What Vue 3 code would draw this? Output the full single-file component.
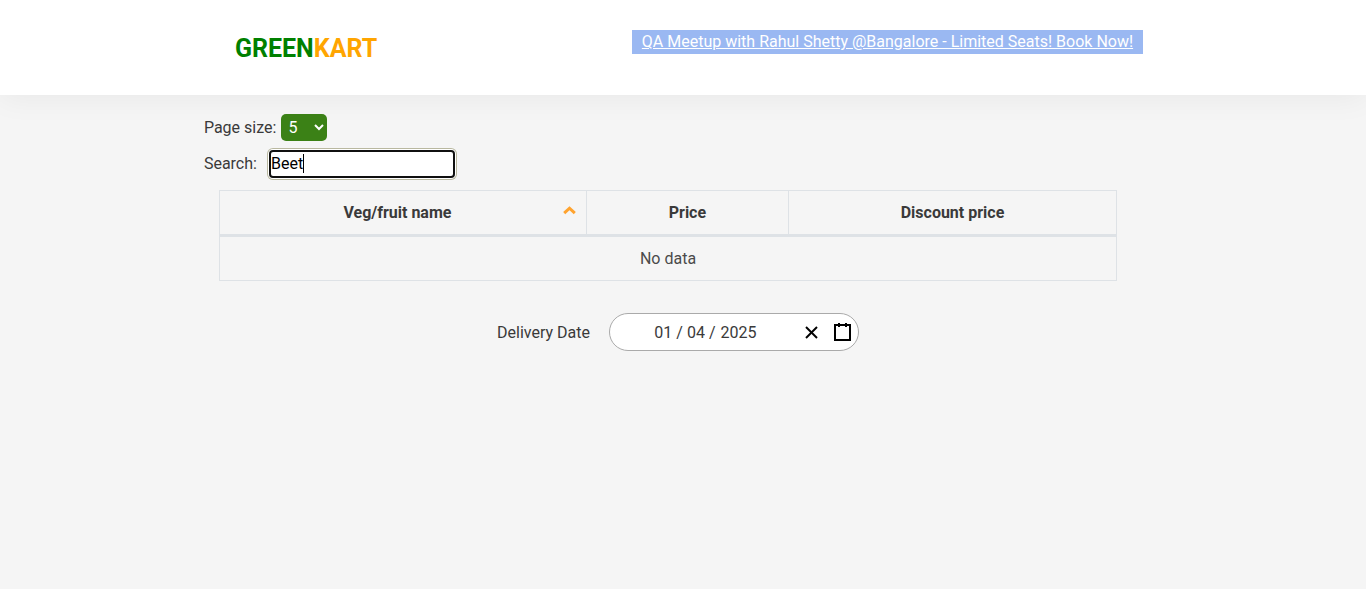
<script setup>
import { ref } from 'vue'

const pageSize = ref('5')
const search = ref('Beet')
const day = ref('01')
const month = ref('04')
const year = ref('2025')

function clearDate() {
  day.value = ''
  month.value = ''
  year.value = ''
}
</script>

<template>
  <div class="page">
    <header class="header">
      <div class="header-inner">
        <div class="brand">GREEN<span class="brand-accent">KART</span></div>
        <a class="promo" href="#">QA Meetup with Rahul Shetty @Bangalore - Limited Seats! Book Now!</a>
      </div>
    </header>

    <main class="content">
      <div class="field size-field">
        <label for="page-size">Page size:</label>
        <select id="page-size" v-model="pageSize" class="size-select">
          <option>5</option>
          <option>10</option>
          <option>20</option>
        </select>
      </div>
      <div class="field search-field">
        <label for="search">Search:</label>
        <div class="search-wrap">
          <input id="search" v-model="search" class="search-input" type="text" />
          <span class="caret"></span>
        </div>
      </div>

      <table class="offers">
        <colgroup>
          <col class="col-name" />
          <col class="col-price" />
          <col />
        </colgroup>
        <thead>
          <tr>
            <th scope="col">
              <div class="sortable">
                <span class="sort-label">Veg/fruit name</span>
                <svg class="sort-icon" width="13" height="9" viewBox="0 0 13 9">
                  <path d="M1.2 7.2 L6.5 2.2 L11.8 7.2" fill="none" stroke="#ffa32e" stroke-width="3" />
                </svg>
              </div>
            </th>
            <th scope="col">Price</th>
            <th scope="col">Discount price</th>
          </tr>
        </thead>
        <tbody>
          <tr>
            <td colspan="3">No data</td>
          </tr>
        </tbody>
      </table>

      <div class="delivery">
        <label for="day">Delivery Date</label>
        <div class="date-picker">
          <div class="date-parts">
            <input id="day" v-model="day" class="part" type="text" aria-label="Delivery Date, day" />
            <span>/</span>
            <input v-model="month" class="part" type="text" aria-label="Month" />
            <span>/</span>
            <input v-model="year" class="part part-year" type="text" aria-label="Year" />
          </div>
          <button class="icon-button" type="button" aria-label="Clear date" @click="clearDate">
            <svg width="19" height="19" viewBox="0 0 19 19" stroke="#000" stroke-width="2">
              <line x1="4" y1="4" x2="15" y2="15" />
              <line x1="15" y1="4" x2="4" y2="15" />
            </svg>
          </button>
          <button class="icon-button" type="button" aria-label="Open calendar">
            <svg width="19" height="19" viewBox="0 0 19 19" fill="none" stroke="#000" stroke-width="2">
              <rect x="2" y="2" width="15" height="15" />
              <line x1="6" y1="0" x2="6" y2="4" />
              <line x1="13" y1="0" x2="13" y2="4" />
            </svg>
          </button>
        </div>
      </div>
    </main>
  </div>
</template>

<style>
body {
  margin: 0;
  background: #f5f5f5;
}
</style>

<style scoped>
.page {
  font-family: Roboto, sans-serif;
  font-size: 16px;
  line-height: 24px;
  color: #3a3a3a;
}

.page *,
.page *::before {
  box-sizing: border-box;
}

.header {
  background: #fff;
  box-shadow: 0 2px 30px rgba(0, 0, 0, 0.06);
}

.header-inner {
  display: flex;
  justify-content: space-between;
  align-items: flex-start;
  width: 70%;
  margin: 0 auto;
  padding: 30px 18px 28px 30px;
}

.brand {
  font-size: 25px;
  font-weight: 700;
  line-height: 37px;
  color: #008000;
}

.brand-accent {
  color: #ffa500;
}

.promo {
  padding: 0 10px;
  background: #9ab8f2;
  color: #fff;
}

.content {
  width: calc(70% + 2px);
  margin: 0 auto;
  padding: 18px 30px 0 0;
}

.field {
  display: flex;
  align-items: center;
}

.size-field {
  gap: 5px;
  height: 29px;
}

.search-field {
  gap: 12px;
  margin-top: 8px;
}

.size-select {
  width: 46px;
  height: 27px;
  padding: 0 0 0 3px;
  border: 0;
  border-radius: 5px;
  background: #3b8116;
  color: #fff;
  font: inherit;
}

.search-wrap {
  position: relative;
}

.search-input {
  display: block;
  width: 186px;
  height: 28px;
  padding: 0 0 1px;
  border: 2px solid #101010;
  border-radius: 4px;
  outline: 0;
  background: #fff;
  box-shadow: 0 0 0 1px #fff, 0 0 0 2px #b9b8a0;
  color: #000;
  font: inherit;
}

.caret {
  position: absolute;
  top: 4px;
  left: 34px;
  width: 1px;
  height: 19px;
  background: #000;
}

.offers {
  width: calc(100% - 30px);
  margin: 12px 15px 32px;
  border-collapse: collapse;
  table-layout: fixed;
  text-align: center;
}

.col-name {
  width: 367px;
}

.col-price {
  width: 202px;
}

.offers th,
.offers td {
  padding: 10px 10px 9px;
  border: 1px solid #dee2e6;
}

.offers th {
  border-bottom: 3px solid #dee2e6;
  font-weight: 700;
}

.offers td {
  color: #4a4a4a;
}

.sortable {
  display: flex;
  align-items: center;
}

.sort-label {
  flex: 1;
  padding-left: 2px;
}

.sort-icon {
  margin-bottom: 5px;
}

.delivery {
  display: flex;
  justify-content: center;
  align-items: center;
  gap: 19px;
  padding-left: 20px;
}

.delivery label,
.date-parts {
  padding-top: 2px;
}

.date-picker {
  display: flex;
  align-items: center;
  width: 250px;
  height: 38px;
  border: 1px solid #aaa;
  border-radius: 19px;
  background: #fff;
}

.date-parts {
  display: flex;
  flex: 1;
  justify-content: center;
  gap: 4px;
  padding-left: 6px;
}

.part {
  width: 18px;
  height: 24px;
  padding: 0;
  border: 0;
  background: transparent;
  color: inherit;
  font: inherit;
  text-align: center;
}

.part-year {
  width: 38px;
}

.icon-button {
  display: flex;
  padding: 6px;
  border: 0;
  background: transparent;
}
</style>
